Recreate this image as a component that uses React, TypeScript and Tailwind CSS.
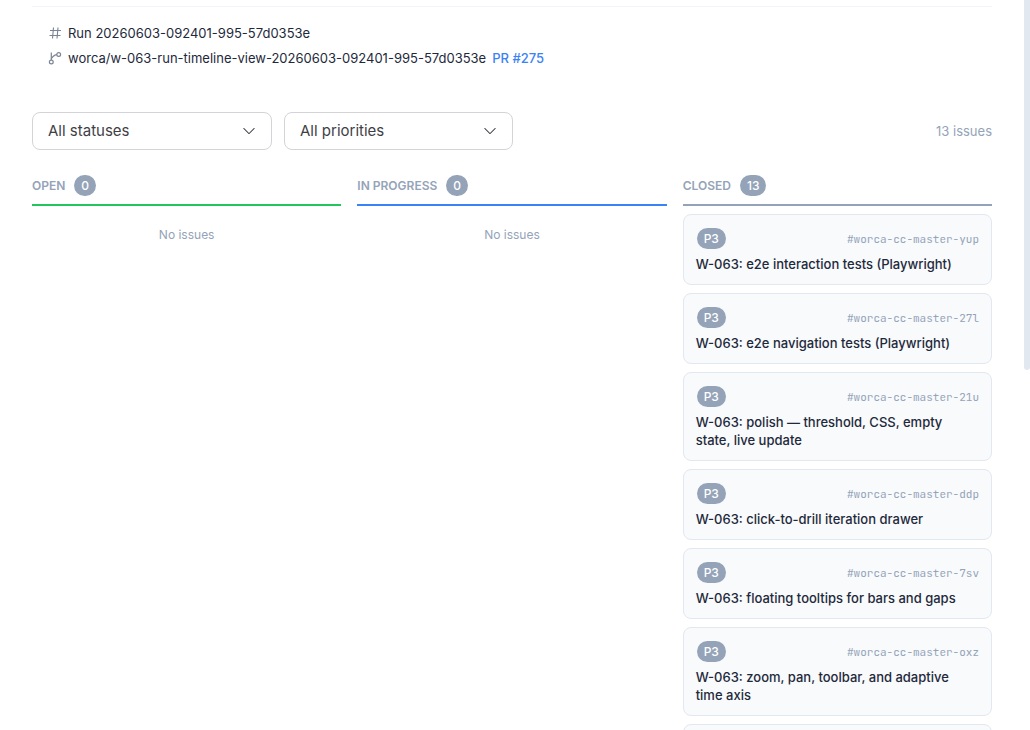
import type { ReactNode } from 'react';

interface Issue {
  id: string;
  priority: string;
  title: string;
}

interface Column {
  key: string;
  label: string;
  count: number;
  border: string;
  issues: Issue[];
}

const closedIssues: Issue[] = [
  { id: 'worca-cc-master-yup', priority: 'P3', title: 'W-063: e2e interaction tests (Playwright)' },
  { id: 'worca-cc-master-27l', priority: 'P3', title: 'W-063: e2e navigation tests (Playwright)' },
  { id: 'worca-cc-master-21u', priority: 'P3', title: 'W-063: polish — threshold, CSS, empty state, live update' },
  { id: 'worca-cc-master-ddp', priority: 'P3', title: 'W-063: click-to-drill iteration drawer' },
  { id: 'worca-cc-master-7sv', priority: 'P3', title: 'W-063: floating tooltips for bars and gaps' },
  { id: 'worca-cc-master-oxz', priority: 'P3', title: 'W-063: zoom, pan, toolbar, and adaptive time axis' },
];

const columns: Column[] = [
  { key: 'open', label: 'Open', count: 0, border: 'border-[#22c55e]', issues: [] },
  { key: 'in_progress', label: 'In progress', count: 0, border: 'border-[#3b82f6]', issues: [] },
  { key: 'closed', label: 'Closed', count: 13, border: 'border-[#94a3b8]', issues: closedIssues },
];

export default function App() {
  return (
    <div className="relative h-screen overflow-hidden bg-white font-['Inter',sans-serif] text-[#1e293b]">
      <main className="pl-8 pr-[38px] pt-[6px]">
        <RunInfo />

        {/* Filters */}
        <div className="mt-11 flex items-center gap-3">
          <FilterSelect label="Status" option="All statuses" width="w-60" />
          <FilterSelect label="Priority" option="All priorities" width="w-[229px]" />
          <span className="ml-auto text-[13px] leading-5 text-[#94a3b8]">13 issues</span>
        </div>

        {/* Board */}
        <div className="mt-6 grid grid-cols-3 gap-4">
          {columns.map((column) => (
            <BoardColumn key={column.key} column={column} />
          ))}
        </div>
      </main>

      {/* Scroll thumb */}
      <div className="absolute right-0 top-0 h-[370px] w-[6px] rounded-b-[3px] bg-[#e2e8f0]" />
    </div>
  );
}

function RunInfo() {
  return (
    <section className="border-t border-[#f1f5f9] px-4 pt-4 text-[13px] leading-5">
      <div className="flex items-center gap-[6px]">
        <HashIcon />
        <span>Run 20260603-092401-995-57d0353e</span>
      </div>
      <div className="mt-[5px] flex items-center gap-[6px]">
        <BranchIcon />
        <span>worca/w-063-run-timeline-view-20260603-092401-995-57d0353e</span>
        <a href="#pr-275" className="font-medium text-[#3b82f6]">
          PR #275
        </a>
      </div>
    </section>
  );
}

function HashIcon() {
  return (
    <svg width="14" height="14" viewBox="0 0 14 14" fill="none" stroke="#7b8494" strokeWidth="1.1">
      <path d="M2 4.500h11M1.500 9.500h11M5.500 1.500l-1 11M10 1.500l-1 11" />
    </svg>
  );
}

function BranchIcon() {
  return (
    <svg width="14" height="14" viewBox="0 0 14 14" fill="none" stroke="#7b8494" strokeWidth="1.2">
      <path d="M3.300 1.500v7.500" />
      <circle cx="3.300" cy="11" r="1.900" />
      <circle cx="10.700" cy="3.500" r="1.900" />
      <path d="M8.800 3.700C6.500 3.700 5.200 5.200 3.300 7.600" />
    </svg>
  );
}

function FilterSelect({ label, option, width }: { label: string; option: string; width: string }) {
  return (
    <div className={`relative ${width}`}>
      <select
        aria-label={label}
        className="h-[38px] w-full appearance-none rounded-lg border border-[#d4d4d8] bg-white px-[15px] text-[15px] text-[#3f3f46]"
      >
        <option>{option}</option>
      </select>
      <svg
        className="pointer-events-none absolute right-4 top-3"
        width="14"
        height="14"
        viewBox="0 0 16 16"
        fill="#3f3f46"
      >
        <path
          fillRule="evenodd"
          d="M1.646 4.646a.5.5 0 0 1 .708 0L8 10.293l5.646-5.647a.5.5 0 0 1 .708.708l-6 6a.5.5 0 0 1-.708 0l-6-6a.5.5 0 0 1 0-.708z"
        />
      </svg>
    </div>
  );
}

function BoardColumn({ column }: { column: Column }) {
  return (
    <section>
      <header className={`flex items-center gap-2 border-b-2 pb-[7px] ${column.border}`}>
        <h2 className="text-xs font-semibold uppercase text-[#94a3b8]">{column.label}</h2>
        <Badge>{column.count}</Badge>
      </header>
      {column.issues.length === 0 ? (
        <p className="pt-5 text-center text-xs leading-[18px] text-[#94a3b8]">No issues</p>
      ) : (
        <div className="flex flex-col gap-2 pt-2">
          {column.issues.map((issue) => (
            <IssueCard key={issue.id} issue={issue} />
          ))}
          {/* Top edge of the next card */}
          <div className="h-[71px] rounded-lg border border-[#e2e8f0] bg-[#f8fafc]" />
        </div>
      )}
    </section>
  );
}

function IssueCard({ issue }: { issue: Issue }) {
  return (
    <article className="rounded-lg border border-[#e2e8f0] bg-[#f8fafc] px-3 pb-[11px] pt-3">
      <div className="flex items-center justify-between">
        <Badge>{issue.priority}</Badge>
        <span className="font-['JetBrains_Mono','DejaVu_Sans_Mono',monospace] text-[11px] leading-5 text-[#94a3b8]">
          #{issue.id}
        </span>
      </div>
      <h3 className="mt-[5px] text-[13px] font-medium leading-[18px]">{issue.title}</h3>
    </article>
  );
}

function Badge({ children }: { children: ReactNode }) {
  return (
    <span className="flex h-[23px] items-center rounded-full border border-transparent bg-[#94a3b8] bg-clip-padding px-[7px] text-xs font-medium text-white">
      {children}
    </span>
  );
}
